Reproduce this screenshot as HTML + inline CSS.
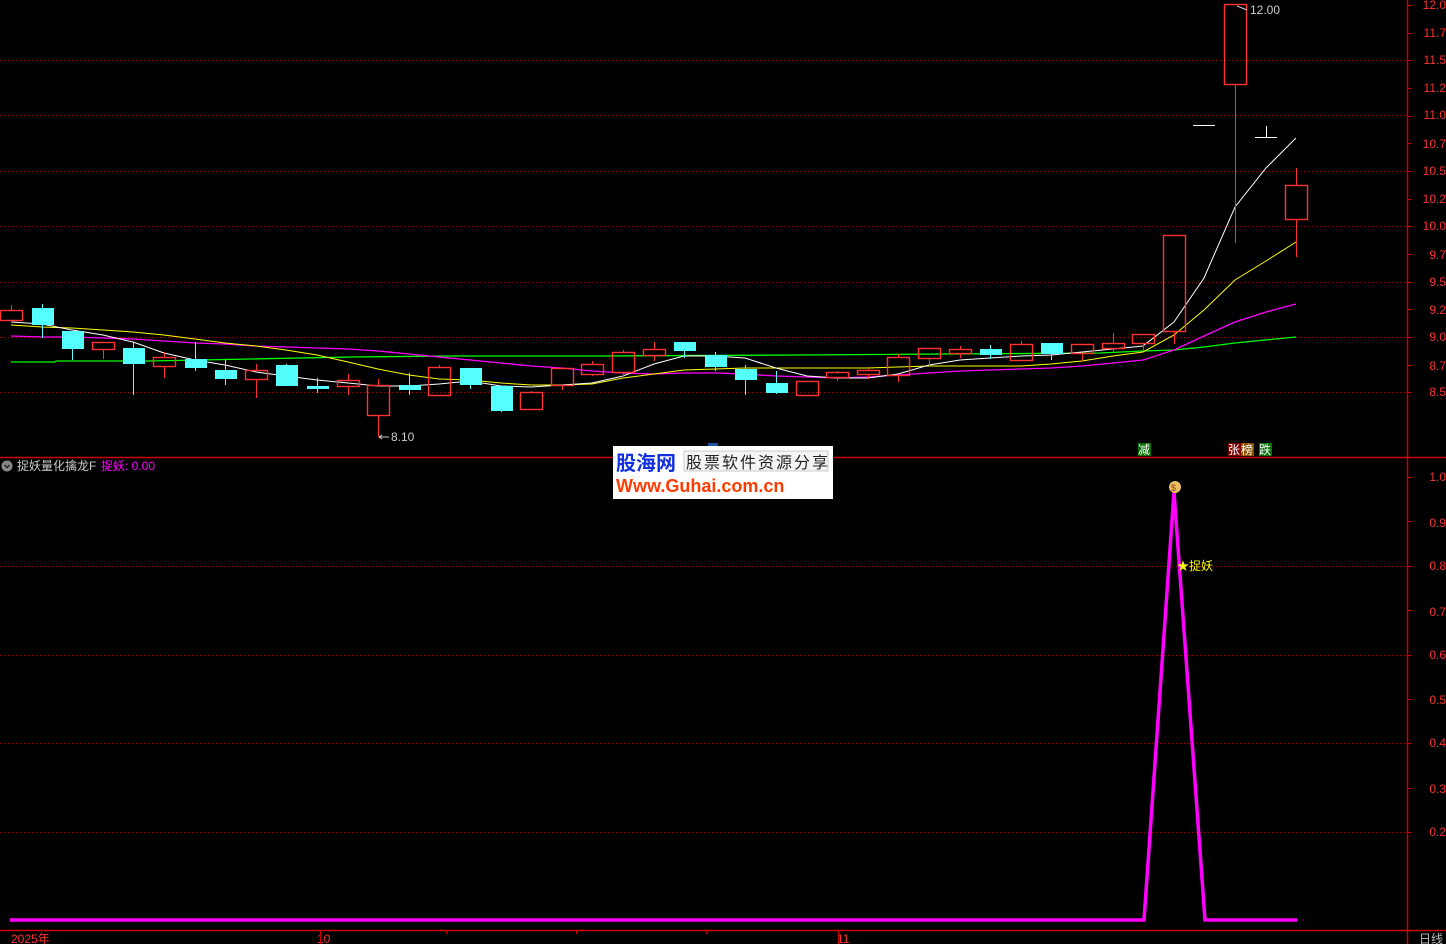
<!DOCTYPE html>
<html><head><meta charset="utf-8"><style>
html,body{margin:0;padding:0;background:#000;width:1446px;height:944px;overflow:hidden}
svg{display:block}
text{font-family:"Liberation Sans","Noto Sans CJK SC",sans-serif}
</style></head><body>
<svg id="s" width="1446" height="944" xmlns="http://www.w3.org/2000/svg">
<rect width="1446" height="944" fill="#000"/>
<g stroke="#a00" stroke-dasharray="1,3" stroke-width="1">
<line x1="0" y1="60.5" x2="1407" y2="60.5"/><line x1="0" y1="115.5" x2="1407" y2="115.5"/>
<line x1="0" y1="171.5" x2="1407" y2="171.5"/><line x1="0" y1="226.5" x2="1407" y2="226.5"/>
<line x1="0" y1="282.5" x2="1407" y2="282.5"/><line x1="0" y1="337.5" x2="1407" y2="337.5"/>
<line x1="0" y1="392.5" x2="1407" y2="392.5"/>
<line x1="0" y1="566.5" x2="1407" y2="566.5"/><line x1="0" y1="655.5" x2="1407" y2="655.5"/>
<line x1="0" y1="743.5" x2="1407" y2="743.5"/><line x1="0" y1="832.5" x2="1407" y2="832.5"/>
</g>
<g stroke="#c00" stroke-width="1.5" fill="none">
<line x1="0" y1="457.5" x2="1446" y2="457.5"/>
<line x1="0" y1="930.5" x2="1446" y2="930.5"/>
<line x1="1407.5" y1="0" x2="1407.5" y2="944"/>
</g>
<g id="ticks" stroke="#c00"></g>
<g fill="#ff3232" font-size="12" text-anchor="end">
<text x="1446" y="9">12.0</text><text x="1446" y="37">11.7</text><text x="1446" y="64">11.5</text>
<text x="1446" y="92">11.2</text><text x="1446" y="119">11.0</text><text x="1446" y="148">10.7</text>
<text x="1446" y="175">10.5</text><text x="1446" y="203">10.2</text><text x="1446" y="230">10.0</text>
<text x="1446" y="259">9.7</text><text x="1446" y="286">9.5</text><text x="1446" y="314">9.2</text>
<text x="1446" y="341">9.0</text><text x="1446" y="370">8.7</text><text x="1446" y="396">8.5</text>
<text x="1446" y="481">1.0</text><text x="1446" y="527">0.9</text><text x="1446" y="570">0.8</text>
<text x="1446" y="616">0.7</text><text x="1446" y="659">0.6</text><text x="1446" y="704">0.5</text>
<text x="1446" y="747">0.4</text><text x="1446" y="793">0.3</text><text x="1446" y="836">0.2</text>
</g>
<g fill="#ff3232" font-size="12">
<text x="11" y="943">2025年</text><text x="317" y="943">10</text><text x="837" y="943">11</text>
</g>
<g stroke="#c00"><line x1="320.5" y1="930" x2="320.5" y2="944"/><line x1="446.5" y1="930" x2="446.5" y2="934"/><line x1="576.5" y1="930" x2="576.5" y2="934"/><line x1="706.5" y1="930" x2="706.5" y2="934"/><line x1="838.5" y1="930" x2="838.5" y2="944"/></g>
<text x="1419" y="943" fill="#bbb" font-size="12">日线</text>
<g id="mas" fill="none"></g>
<g id="c"></g>
<text x="391" y="441" fill="#ccc" font-size="12">8.10</text>
<path d="M379 437 h10 M379 437 l3 -2 M379 437 l3 2" stroke="#ccc" fill="none"/>
<text x="1250" y="14" fill="#ccc" font-size="12">12.00</text>
<path d="M1237 6 l10 4" stroke="#ccc" fill="none"/>
<rect x="1138" y="443" width="13" height="13" fill="#0a6e0a"/><text x="1138" y="454" fill="#fff" font-size="12">减</text>
<rect x="1228" y="443" width="13" height="13" fill="#7a0000"/><text x="1228" y="454" fill="#fff" font-size="12">张</text>
<rect x="1241" y="443" width="13" height="13" fill="#8a5000"/><text x="1241" y="454" fill="#fff" font-size="12">榜</text>
<rect x="1259" y="443" width="13" height="13" fill="#0a6e0a"/><text x="1259" y="454" fill="#fff" font-size="12">跌</text>
<circle cx="7" cy="466" r="5.5" fill="#888"/><path d="M4.5 465 l2.5 2.5 l2.5 -2.5" stroke="#222" stroke-width="1.5" fill="none"/>
<text x="17" y="470" fill="#ccc" font-size="12">捉妖量化擒龙F</text>
<text x="101" y="470" fill="#ff00ff" font-size="12">捉妖: 0.00</text>
<polyline points="10,920 1144,920 1174,492 1205,920 1297,920" fill="none" stroke="#ff00ff" stroke-width="3.5"/>
<circle cx="1175" cy="487" r="6" fill="#e8c060"/><text x="1171" y="491" font-size="9" fill="#a33">$</text>
<text x="1177" y="570" fill="#ffff00" font-size="12">★捉妖</text>
<rect x="708" y="443" width="10" height="4" fill="#2050a0"/>
<rect x="613" y="446" width="220" height="53" fill="#fff"/>
<text x="616" y="470" fill="#1030e0" font-size="20" font-weight="bold">股海网</text>
<rect x="684" y="451" width="144" height="20" fill="#f4f4f4" stroke="#999" stroke-width="0.5"/>
<text x="686" y="468" fill="#222" font-size="16" font-family="Noto Serif CJK SC,serif" letter-spacing="2">股票软件资源分享</text>
<text x="616" y="492" fill="#ff3c00" font-size="18" font-weight="bold">Www.Guhai.com.cn</text>
</svg>
<script>
var NS="http://www.w3.org/2000/svg";
function el(p,t,a){var e=document.createElementNS(NS,t);for(var k in a)e.setAttribute(k,a[k]);p.appendChild(e);return e;}
var tk=document.getElementById('ticks');
for(var p=8.5;p<=12.01;p+=0.25){var y=Math.round(5+(12-p)*110.7)+0.5;el(tk,'line',{x1:1407,y1:y,x2:1412,y2:y});}
for(var v=0.2;v<=1.01;v+=0.1){var y=Math.round(921-v*444)+0.5;el(tk,'line',{x1:1407,y1:y,x2:1412,y2:y});}
var C=[["r",310,320,305,323],["c",308,325,304,338],["c",331,349,331,360],["r",342,349,342,359],["c",348,364,343,395],["r",357,366,352,378],["c",359,368,342,371],["c",370,379,360,385],["r",370,379,364,398],["c",365,386,364,386],["c",386,389,378,393],["r",380,386,374,395],["r",385,415,379,437],["c",385,390,373,395],["r",367,395,365,395],["c",368,385,368,389],["c",386,411,386,412],["r",392,409,391,409],["r",368,385,368,390],["r",364,374,361,376],["r",352,372,350,376],["r",349,355,342,361],["c",342,351,342,358],["c",355,367,352,371],["c",369,380,365,395],["c",383,393,371,394],["r",381,395,381,396],["r",372,377,371,381],["r",370,374,369,379],["r",357,375,354,382],["r",348,358,348,367],["r",349,353,346,358],["c",349,355,345,359],["r",344,360,341,360],["c",343,354,343,360],["r",344,353,344,361],["r",343,348,333,352],["r",334,343,334,350],["r",235,331,235,344],["d"],["r",4,84,4,243],["t"],["r",185,219,168,257]];
var g=document.getElementById('c');
C.forEach(function(c,i){var cx=Math.round(11+30.6*i);
 if(c[0]=="d"){el(g,'line',{x1:cx-11,y1:125.5,x2:cx+11,y2:125.5,stroke:'#fff'});return;}
 if(c[0]=="t"){el(g,'line',{x1:cx-11,y1:137.5,x2:cx+11,y2:137.5,stroke:'#fff'});el(g,'line',{x1:cx+0.5,y1:126,x2:cx+0.5,y2:137,stroke:'#fff'});return;}
 var col=c[0]=="r"?"#ff3232":"#54ffff";
 if(c[0]=="r"){
  el(g,'line',{x1:cx+0.5,y1:c[3],x2:cx+0.5,y2:c[1],stroke:col});
  el(g,'line',{x1:cx+0.5,y1:c[2],x2:cx+0.5,y2:c[4],stroke:col});
  el(g,'rect',{x:cx-10.5,y:c[1]+0.5,width:22,height:c[2]-c[1],fill:'none',stroke:col,'stroke-width':1.4});}
 else {el(g,'line',{x1:cx+0.5,y1:c[3],x2:cx+0.5,y2:c[4],stroke:col});
  el(g,'rect',{x:cx-10,y:c[1],width:22,height:Math.max(2,c[2]-c[1]),fill:col});}
});
var W=[322,324,330,335,342,353,360,365,372,376,380,383,386,386,384,381,386,387,385,383,376,364,356,356,358,368,376,378,378,374,365,360,358,356,355,352,349,346,322,278,207,168,138];
var Y=[325,327,328,330,332,335,339,343,346,350,355,362,369,375,379,380,383,385,385,384,378,374,370,369,368,368,368,368,368,367,366,366,366,366,364,361,356,352,335,310,280,261,242];
var M=[336,337,337,338,339,341,343,344,346,347,348,349,351,354,357,360,363,366,368,371,373,374,373,373,374,376,377,378,377,375,373,371,370,369,368,366,363,360,350,336,322,312,304];
function pl(a,col,w){var s=a.map(function(y,i){return Math.round(11+30.6*i)+','+y}).join(' ');el(document.getElementById('mas'),'polyline',{points:s,stroke:col,'stroke-width':w});}
el(document.getElementById('mas'),'polyline',{points:"11,362 55,362 56,361 150,361 250,359 350,357 450,356 600,356 800,355 1100,353 1143,351 1174,350 1204,347 1235,343 1265,340 1296,337",stroke:'#00ff00','stroke-width':1.3});
pl(M,'#ff00ff',1.3);pl(Y,'#ffff00',1);pl(W,'#ffffff',1);
</script>
</body></html>
